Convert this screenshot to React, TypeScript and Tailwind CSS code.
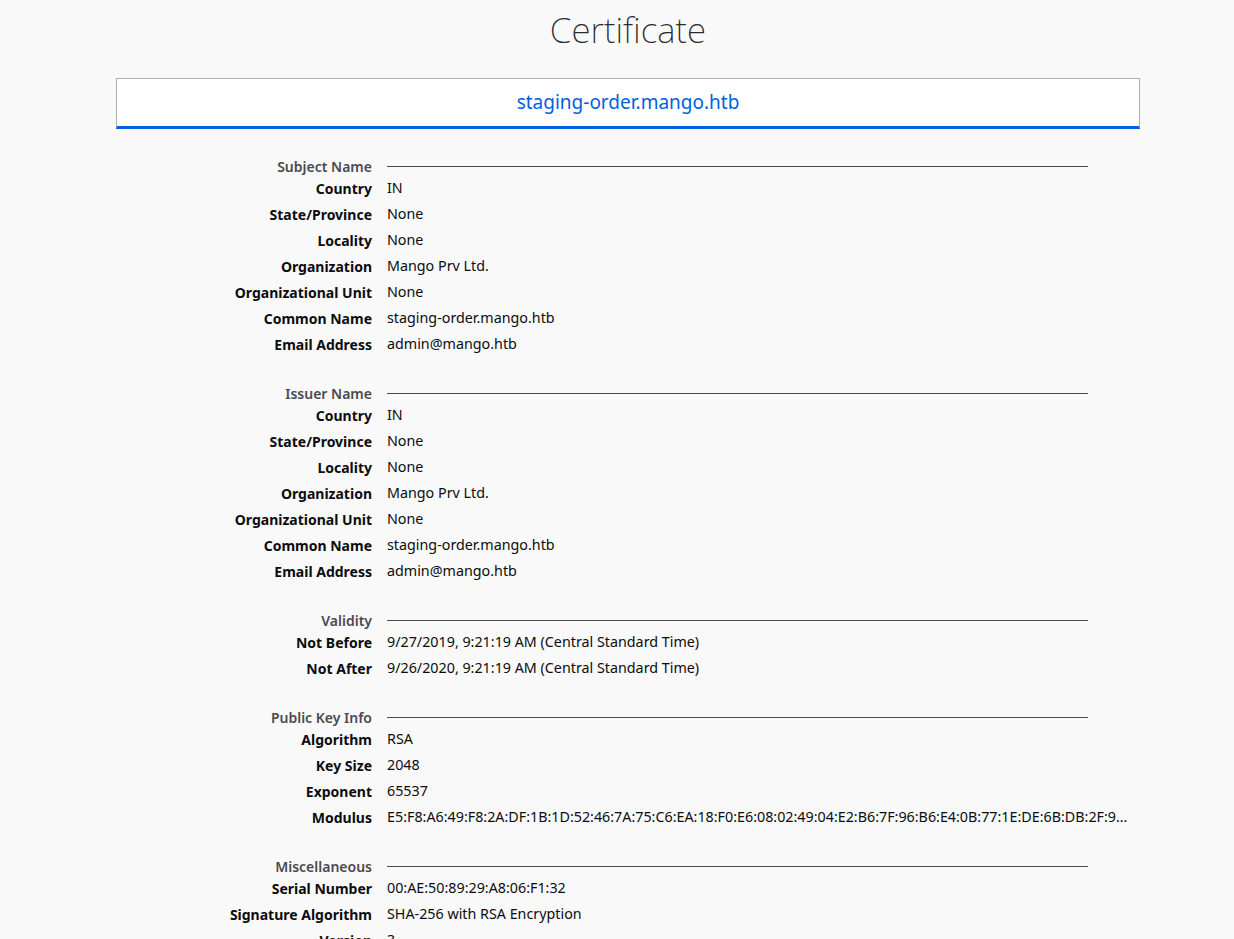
const sections: { title: string; rows: [string, string][] }[] = [
  {
    title: "Subject Name",
    rows: [
      ["Country", "IN"],
      ["State/Province", "None"],
      ["Locality", "None"],
      ["Organization", "Mango Prv Ltd."],
      ["Organizational Unit", "None"],
      ["Common Name", "staging-order.mango.htb"],
      ["Email Address", "admin@mango.htb"],
    ],
  },
  {
    title: "Issuer Name",
    rows: [
      ["Country", "IN"],
      ["State/Province", "None"],
      ["Locality", "None"],
      ["Organization", "Mango Prv Ltd."],
      ["Organizational Unit", "None"],
      ["Common Name", "staging-order.mango.htb"],
      ["Email Address", "admin@mango.htb"],
    ],
  },
  {
    title: "Validity",
    rows: [
      ["Not Before", "9/27/2019, 9:21:19 AM (Central Standard Time)"],
      ["Not After", "9/26/2020, 9:21:19 AM (Central Standard Time)"],
    ],
  },
  {
    title: "Public Key Info",
    rows: [
      ["Algorithm", "RSA"],
      ["Key Size", "2048"],
      ["Exponent", "65537"],
      [
        "Modulus",
        "E5:F8:A6:49:F8:2A:DF:1B:1D:52:46:7A:75:C6:EA:18:F0:E6:08:02:49:04:E2:B6:7F:96:B6:E4:0B:77:1E:DE:6B:DB:2F:91:A0:3C:5E:11",
      ],
    ],
  },
  {
    title: "Miscellaneous",
    rows: [
      ["Serial Number", "00:AE:50:89:29:A8:06:F1:32"],
      ["Signature Algorithm", "SHA-256 with RSA Encryption"],
      ["Version", "3"],
    ],
  },
];

function Section({ title, rows }: { title: string; rows: [string, string][] }) {
  return (
    <div className="mb-[27px]">
      <div className="flex h-[18px] items-center">
        <div className="w-[256px] shrink-0 text-right text-[14px] font-semibold text-[#4a4a4f]">
          {title}
        </div>
        <div className="ml-[15px] h-px w-[701px] bg-[#4a4a4f]" />
      </div>
      {rows.map(([label, value], i) => (
        <div key={i} className="flex h-[26px] items-center">
          <div className="w-[256px] shrink-0 text-right text-[14px] font-bold text-[#0c0c0d]">
            {label}
          </div>
          <div className="ml-[15px] w-[748px] truncate text-[14.3px] text-[#0c0c0d]">
            {value}
          </div>
        </div>
      ))}
    </div>
  );
}

export default function App() {
  return (
    <div
      className="min-h-screen bg-[#f9f9fa] text-[#0c0c0d]"
      style={{ fontFamily: '"Noto Sans", "Open Sans", sans-serif' }}
    >
      <div className="ml-[116px] w-[1024px]">
        <h1 className="pt-[6px] text-center text-[35px] font-extralight leading-[48px] text-[#2a2a2e]">
          Certificate
        </h1>
        <div className="mt-[24px] flex h-[51px] items-center justify-center border border-b-[3px] border-[#b1b1b3] border-b-[#0060df] bg-white text-[19px] text-[#0060df]">
          staging-order.mango.htb
        </div>
        <div className="pt-[28px]">
          {sections.map((s) => (
            <Section key={s.title} title={s.title} rows={s.rows} />
          ))}
        </div>
      </div>
    </div>
  );
}
